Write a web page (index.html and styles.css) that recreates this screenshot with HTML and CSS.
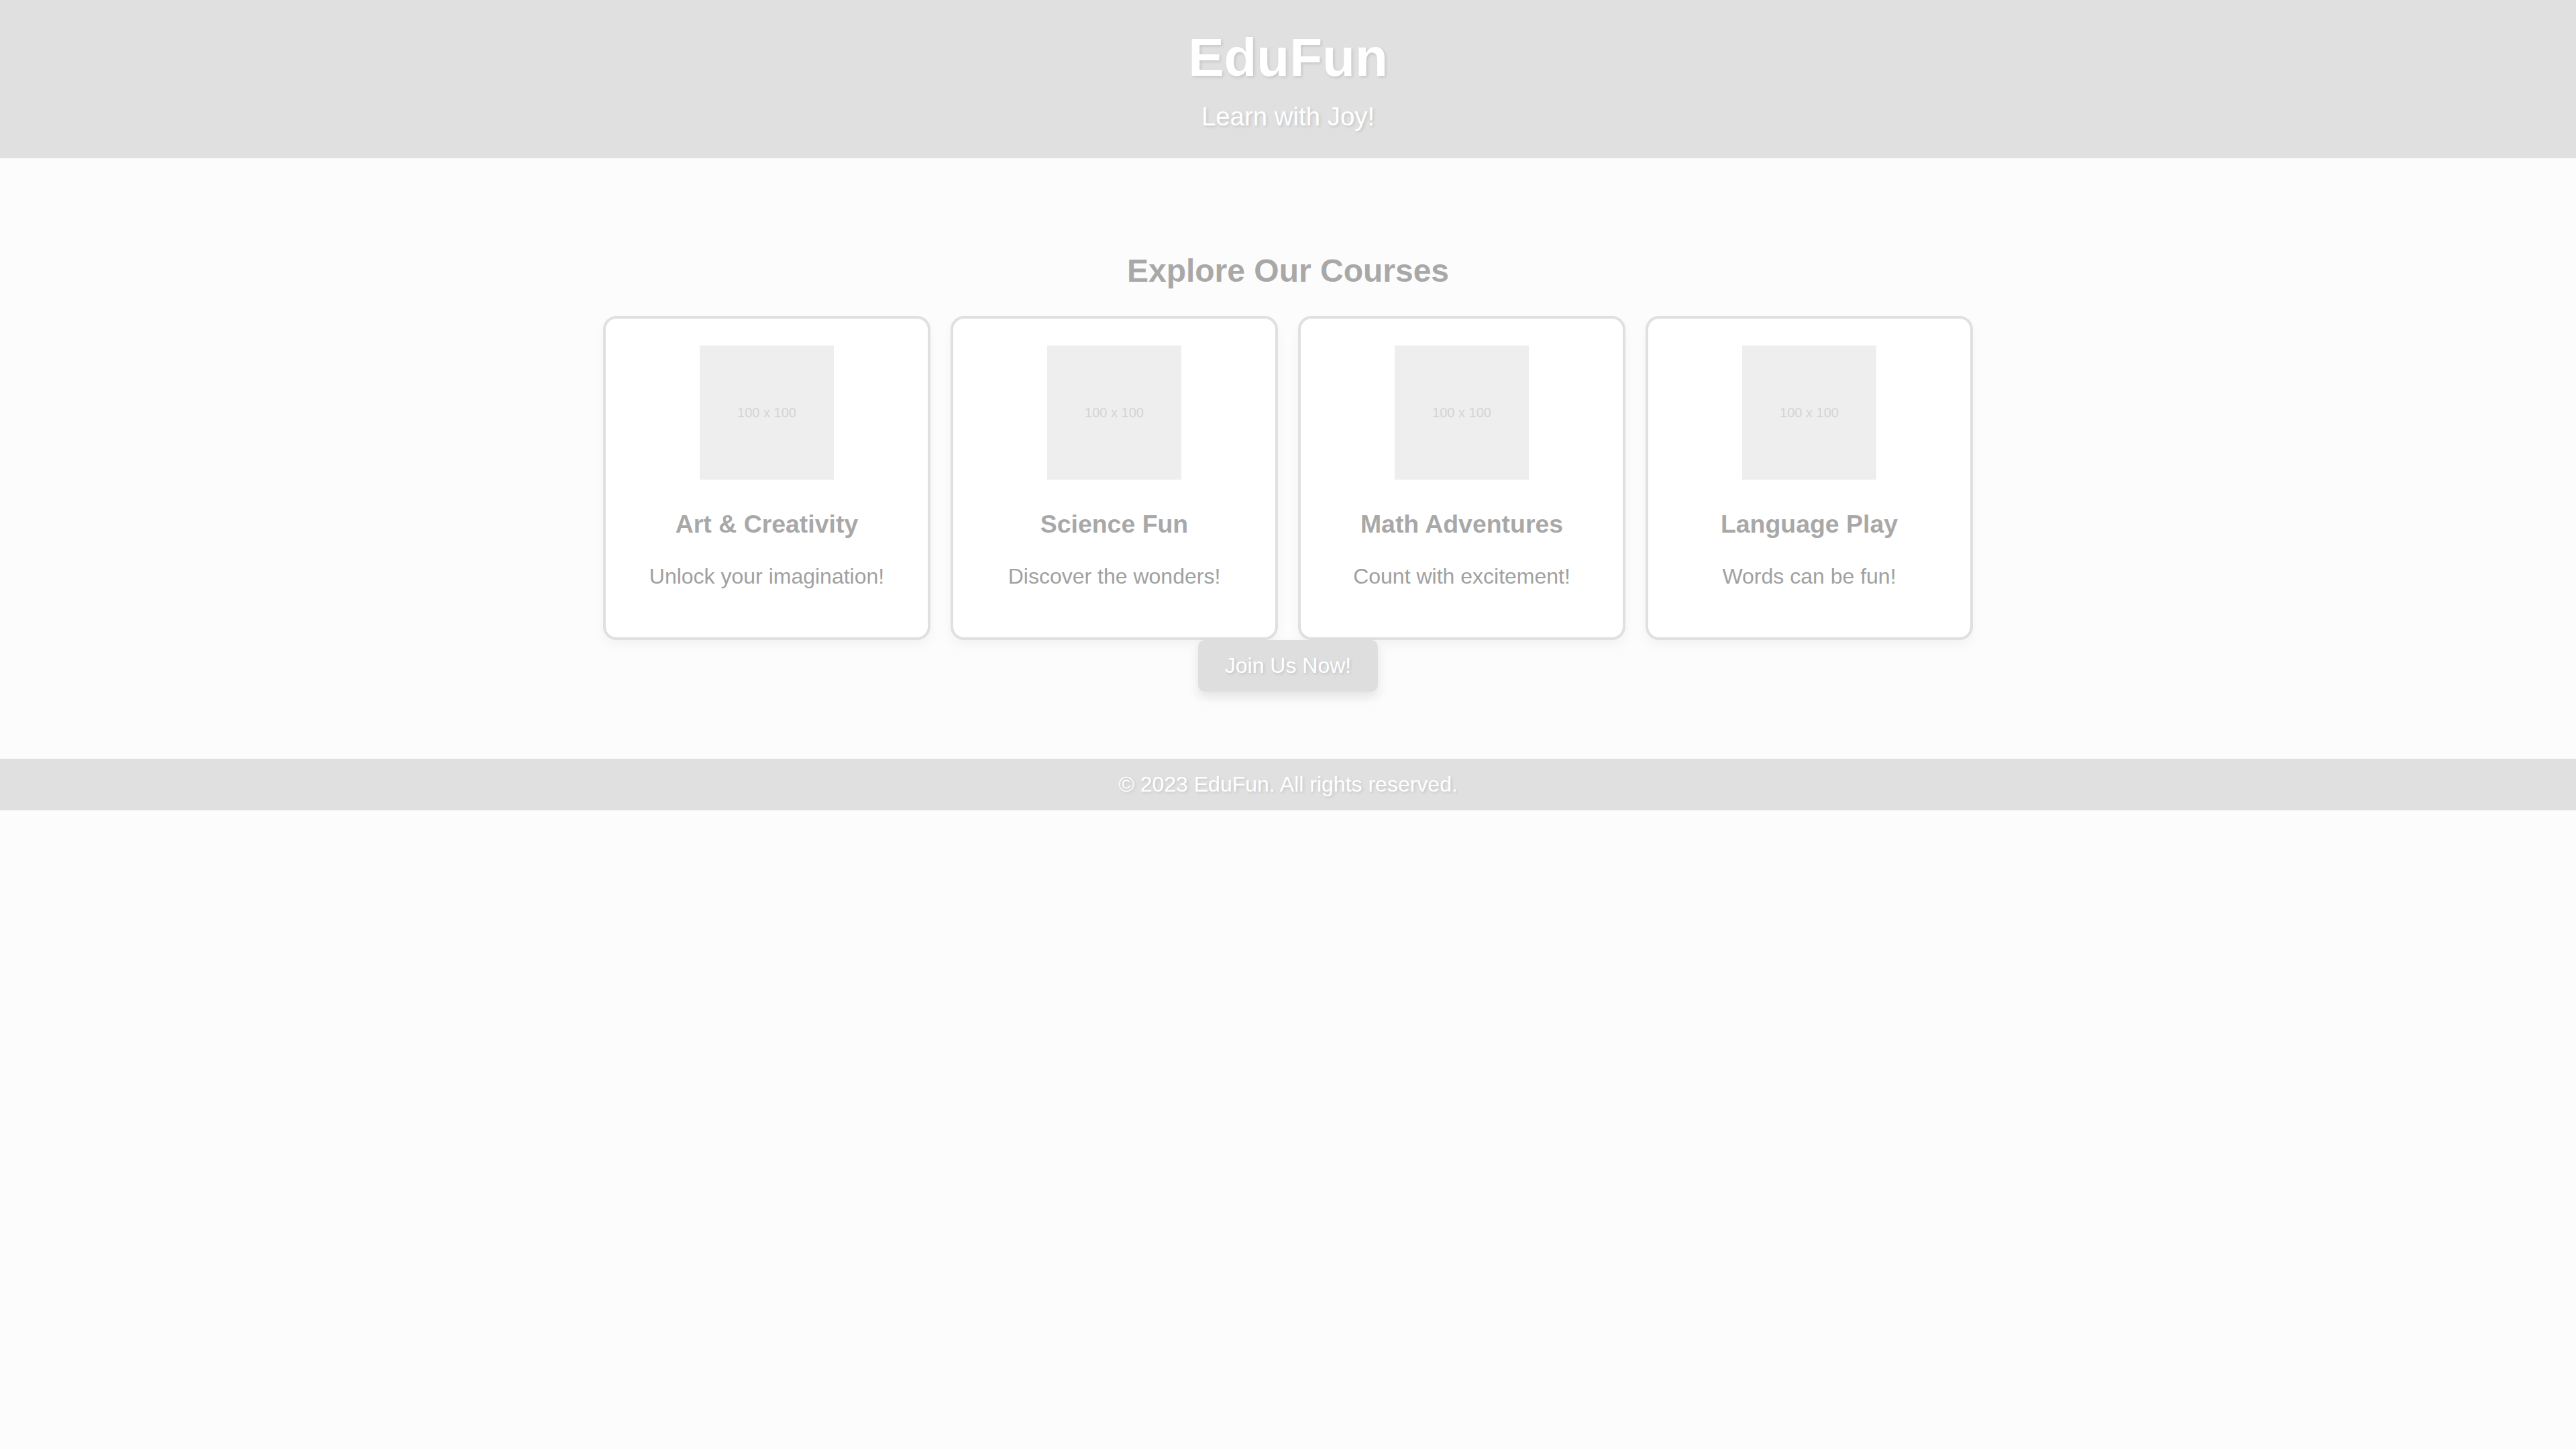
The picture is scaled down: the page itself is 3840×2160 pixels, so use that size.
FILE: index.html
```html
<!DOCTYPE html>
<html lang="en">
<head>
<meta charset="utf-8">
<title>EduFun</title>
<link rel="stylesheet" href="styles.css">
</head>
<body>
<header class="site-header">
  <h1 class="brand">EduFun</h1>
  <p class="tagline">Learn with Joy!</p>
</header>
<main class="main">
  <h2 class="section-title">Explore Our Courses</h2>
  <div class="courses">
    <div class="card">
      <div class="thumb">100 x 100</div>
      <h3 class="card-title">Art &amp; Creativity</h3>
      <p class="card-text">Unlock your imagination!</p>
    </div>
    <div class="card">
      <div class="thumb">100 x 100</div>
      <h3 class="card-title">Science Fun</h3>
      <p class="card-text">Discover the wonders!</p>
    </div>
    <div class="card">
      <div class="thumb">100 x 100</div>
      <h3 class="card-title">Math Adventures</h3>
      <p class="card-text">Count with excitement!</p>
    </div>
    <div class="card">
      <div class="thumb">100 x 100</div>
      <h3 class="card-title">Language Play</h3>
      <p class="card-text">Words can be fun!</p>
    </div>
  </div>
  <div class="cta-row">
    <button class="cta">Join Us Now!</button>
  </div>
</main>
<footer class="site-footer">
  <p class="copyright">&copy; 2023 EduFun. All rights reserved.</p>
</footer>
</body>
</html>
```
FILE: styles.css
```css
html, body {
  margin: 0;
  padding: 0;
}
body {
  background: #fcfcfc;
  font-family: "Liberation Sans", Arial, Helvetica, sans-serif;
  color: #a8a8a8;
}
.site-header {
  background: #e0e0e0;
  color: #ffffff;
  text-align: center;
  padding: 40px;
}
.brand {
  font-size: 80px;
  font-weight: bold;
  margin: 0 0 20px;
  line-height: normal;
  text-shadow: 2px 2px 4px rgba(0, 0, 0, 0.12);
}
.tagline {
  font-size: 38.4px;
  margin: 0;
  line-height: normal;
  text-shadow: 2px 2px 4px rgba(0, 0, 0, 0.12);
}
.main {
  padding: 100px 40px;
  text-align: center;
}
.section-title {
  font-size: 48px;
  font-weight: bold;
  margin: 40px 0;
  line-height: normal;
  color: #a8a8a8;
}
.courses {
  display: flex;
  justify-content: center;
  gap: 30px;
}
.card {
  width: 400px;
  padding: 40px;
  background: #ffffff;
  border: 4px solid #e0e0e0;
  border-radius: 20px;
  box-shadow: 0 8px 16px rgba(0, 0, 0, 0.04);
}
.thumb {
  width: 200px;
  height: 200px;
  margin: 0 auto;
  background: #eeeeee;
  color: #d4d4d4;
  font-size: 20px;
  display: flex;
  align-items: center;
  justify-content: center;
}
.card-title {
  font-size: 37.44px;
  font-weight: bold;
  margin: 45px 0 38px;
  line-height: normal;
  color: #a8a8a8;
}
.card-text {
  font-size: 32px;
  margin: 0 0 32px;
  line-height: normal;
  color: #a0a0a0;
}
.cta-row {
  display: flex;
  justify-content: center;
}
.cta {
  font-family: "Liberation Sans", Arial, Helvetica, sans-serif;
  font-size: 32px;
  line-height: normal;
  color: #ffffff;
  background: #dedede;
  border: none;
  border-radius: 10px;
  padding: 20px 40px;
  box-shadow: 0 8px 16px rgba(0, 0, 0, 0.1);
  text-shadow: 2px 2px 4px rgba(0, 0, 0, 0.12);
  cursor: pointer;
}
.site-footer {
  background: #e0e0e0;
  color: #ffffff;
  text-align: center;
  padding: 20px;
}
.copyright {
  margin: 0;
  font-size: 32px;
  line-height: normal;
  text-shadow: 2px 2px 4px rgba(0, 0, 0, 0.12);
}
```
